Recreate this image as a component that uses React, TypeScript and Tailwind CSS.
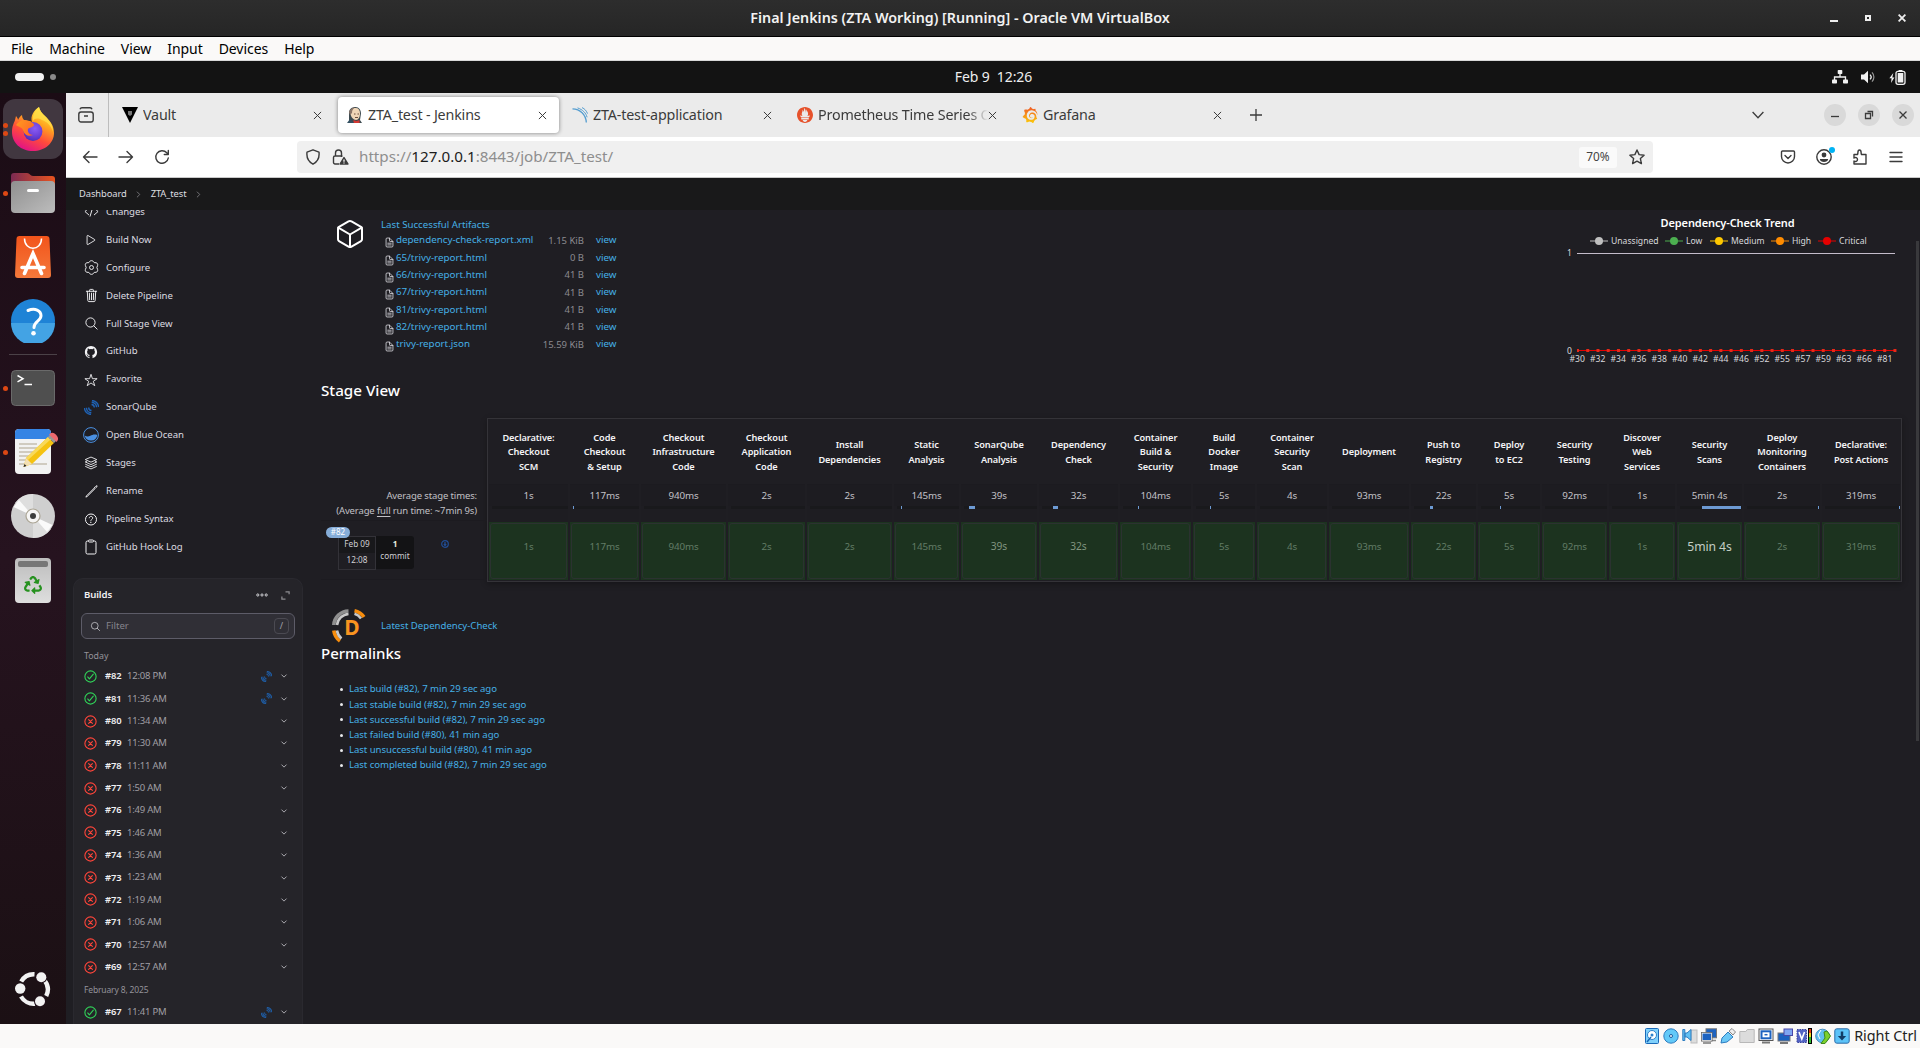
import React from "react";
import {
  IoCodeSlashOutline, IoPlayOutline, IoTrashOutline, IoSearchOutline, IoLogoGithub,
  IoStarOutline, IoPencilOutline, IoHelpCircleOutline, IoClipboardOutline, IoCubeOutline,
  IoDocumentTextOutline, IoCheckmarkCircleOutline, IoCloseCircleOutline, IoChevronDown, IoChevronForward,
} from "react-icons/io5";
import { FaRecycle } from "react-icons/fa";
import { SiGrafana, SiPrometheus } from "react-icons/si";

/* ---------- shared glyphs ---------- */

const Sonar = ({ className }: { className: string }) => (
  <svg viewBox="0 0 16 16" className={className} fill="none" stroke="currentColor" strokeWidth="1.5">
    <path d="M8 4.8A3.2 3.2 0 0 1 11 8M8.2 2.4A5.6 5.6 0 0 1 13.4 7.8M8.5.6A7.4 7.4 0 0 1 15.6 7.5" />
    <path d="M8 11.2A3.2 3.2 0 0 1 5 8M7.8 13.6A5.6 5.6 0 0 1 2.6 8.2M7.5 15.4A7.4 7.4 0 0 1 .4 8.5" />
  </svg>
);

const Ocean = ({ className }: { className: string }) => (
  <svg viewBox="0 0 16 16" className={className}>
    <circle cx="8" cy="8" r="7.4" fill="none" stroke="#4a90e2" strokeWidth="1" />
    <path d="M1.7 8.6c2 1.2 4 .9 5.6.2 2-.9 4-2 7-.8A6.4 6.4 0 0 1 1.7 8.6Z" fill="#4a90e2" />
  </svg>
);

const Gear = ({ className }: { className: string }) => (
  <svg viewBox="0 0 16 16" className={className} fill="none" stroke="currentColor" strokeWidth="1">
    <path d="M6.300 1.300C7 .5 9 .5 9.700 1.300l1.200 1.500 2 .1c1.300.2 2.100 1.900 1.600 3L13.700 8l.8 2.100c.5 1.100-.3 2.800-1.600 3l-2 .1-1.200 1.500c-.7.8-2.700.8-3.400 0l-1.200-1.500-2-.1c-1.300-.2-2.100-1.900-1.600-3L2.300 8l-.8-2.100c-.5-1.100.3-2.800 1.600-3l2-.1z" />
    <circle cx="8" cy="8" r="2.100" />
  </svg>
);

const Layers = ({ className }: { className: string }) => (
  <svg viewBox="0 0 16 16" className={className} fill="none" stroke="currentColor" strokeWidth="1" strokeLinejoin="round">
    <path d="M8 1.200l6.600 2.900L8 7 1.400 4.100zM1.400 6.800L8 9.800l6.600-3M1.400 9.300L8 12.300l6.600-3M1.400 11.800L8 14.800l6.600-3M1.400 6.800l2-.9M14.600 6.800l-2-.9" />
  </svg>
);

const Close = ({ className }: { className: string }) => (
  <svg viewBox="0 0 10 10" className={className} fill="none" stroke="currentColor" strokeWidth="1.1">
    <path d="M1 1l8 8M9 1l-8 8" />
  </svg>
);

/* ---------- host window ---------- */

const TitleBar = () => (
  <div className="relative flex h-[37px] shrink-0 items-center justify-center border-b border-black bg-gradient-to-b from-[#2d2d2d] to-[#262626]">
    <span className="text-[14.300px] font-semibold text-[#f2f2f2]">
      Final Jenkins (ZTA Working) [Running] - Oracle VM VirtualBox
    </span>
    <div className="absolute right-[14px] flex items-center gap-[27px] text-[#eee]">
      <span className="mt-[5px] block h-[2px] w-2 bg-[#eee]" />
      <span className="block size-[6px] border-2 border-[#eee]" />
      <svg viewBox="0 0 8 8" className="size-2" stroke="currentColor" strokeWidth="1.8"><path d="M.6.6l6.8 6.8M7.4.6L.6 7.4" /></svg>
    </div>
  </div>
);

const MenuBar = () => (
  <div className="flex h-6 shrink-0 items-center gap-4 border-b border-[#d8d8d8] bg-[#faf9f8] pl-[11px] text-[14px] leading-none tracking-[-0.060px] text-black">
    {["File", "Machine", "View", "Input", "Devices", "Help"].map((m) => <span key={m}>{m}</span>)}
  </div>
);

const GnomeBar = () => (
  <div className="flex h-8 shrink-0 items-center bg-[#131313] pl-[15px] pr-[14px]">
    <div className="flex flex-1 items-center gap-[6px]">
      <span className="h-2 w-[29px] rounded-full bg-[#f2f2f2]" />
      <span className="size-[6px] rounded-full bg-[#8a8a8a]" />
    </div>
    <span className="whitespace-pre pb-[2px] pl-[66px] text-[14px] tracking-[-0.1px] text-[#eee]">Feb 9  12:26</span>
    <div className="flex flex-1 items-center justify-end gap-[13px] text-[#f2f2f2]">
      <svg viewBox="0 0 16 14" className="h-[14px] w-4" fill="currentColor">
        <rect x="5.7" y="0" width="4.6" height="4" rx=".8" /><rect x="0" y="9.5" width="5" height="4" rx=".8" /><rect x="11" y="9.5" width="5" height="4" rx=".8" />
        <path d="M8 3v4M2.5 10V7h11v3" fill="none" stroke="currentColor" strokeWidth="1.3" />
      </svg>
      <svg viewBox="0 0 15 14" className="h-[14px] w-[15px]" fill="none" stroke="currentColor">
        <path d="M0 4.5h3L7 .8v12.4L3 9.5H0z" fill="currentColor" stroke="none" />
        <path d="M9 4.6a3.4 3.4 0 0 1 0 4.8" strokeWidth="1.3" />
        <path d="M11 2.4a6.5 6.5 0 0 1 0 9.2" strokeWidth="1.2" opacity=".6" />
      </svg>
      <svg viewBox="0 0 17 15" className="h-[15px] w-[17px]" fill="currentColor">
        <path d="M4.3 3L.4 8.2h2.2L2 13l3.4-5.4H3.3z" />
        <rect x="7" y="1.3" width="9" height="13" rx="2" fill="none" stroke="currentColor" strokeWidth="1.3" />
        <rect x="8.7" y="3" width="5.6" height="9.6" rx=".5" /><rect x="9.6" y="0" width="3.8" height="1.4" />
      </svg>
    </div>
  </div>
);

/* ---------- dock ---------- */

const Firefox = () => (
  <svg viewBox="0 0 42 44" className="h-[44px] w-[42px]">
    <defs>
      <linearGradient id="ff1" x1=".8" y1="0" x2=".3" y2="1">
        <stop offset="0" stopColor="#fff44f" /><stop offset=".35" stopColor="#ffa61f" /><stop offset=".65" stopColor="#ff4a3c" /><stop offset="1" stopColor="#e0108a" />
      </linearGradient>
      <radialGradient id="ff2" cx=".6" cy=".35" r=".7">
        <stop offset="0" stopColor="#8a5cf5" /><stop offset=".6" stopColor="#6a3fd6" /><stop offset="1" stopColor="#4b2db5" />
      </radialGradient>
      <linearGradient id="ff3" x1="0" y1="0" x2="1" y2=".6">
        <stop offset="0" stopColor="#ff9a1f" /><stop offset="1" stopColor="#ff6a26" />
      </linearGradient>
    </defs>
    <path d="M27 0c1 4 3 6 6 9 5 5 9 9 9 17 0 10-9 18-21 18S0 36 0 25c0-6 2-9 3-12l1-4c1 1 2 3 2 4 1-2 2-4 4-5 0 2 1 4 2 5 3 0 6 1 8 2C18 9 22 3 27 0Z" fill="url(#ff1)" />
    <path d="M27 0c1 4 3 6 6 9 5 5 8 9 8 16-2-7-6-10-11-12-4-2-7-2-9 1-1-5 2-11 6-14Z" fill="#ffe14a" opacity=".75" />
    <circle cx="21" cy="24.5" r="9.4" fill="url(#ff2)" />
    <path d="M4 18c3-4 7-6 12-4 3 1 6 2 6 4-1 3-5 2-6 4-1 3 2 6 5 6-4 2-9 0-10-5-1-3-4-3-7-5Z" fill="url(#ff3)" />
  </svg>
);

const dockIcons = {
  files: (
    <svg viewBox="0 0 44 42" className="h-[42px] w-11">
      <defs>
        <linearGradient id="fo" x1="0" x2="1"><stop offset="0" stopColor="#7b2a52" /><stop offset="1" stopColor="#e9541f" /></linearGradient>
        <linearGradient id="fg" x1="0" y1="0" x2="1" y2="1"><stop offset="0" stopColor="#8f8f8f" /><stop offset="1" stopColor="#bdbdbd" /></linearGradient>
      </defs>
      <path d="M0 4a3 3 0 0 1 3-3h13c3 0 3 3 6 3h19a3 3 0 0 1 3 3v12H0z" fill="url(#fo)" />
      <rect x="0" y="9" width="44" height="32" rx="4" fill="url(#fg)" /><rect x="16" y="17" width="12" height="3" rx="1.5" fill="#fff" />
    </svg>
  ),
  store: (
    <svg viewBox="0 0 36 42" className="h-[42px] w-9">
      <defs><linearGradient id="st" y2="1" x2="0"><stop offset="0" stopColor="#f2541b" /><stop offset="1" stopColor="#f4793b" /></linearGradient></defs>
      <path d="M4.500 0h27a3 3 0 0 1 3 3L36 39a3 3 0 0 1-3 3H3a3 3 0 0 1-3-3L1.500 3a3 3 0 0 1 3-3Z" fill="url(#st)" />
      <path d="M9.500 2.500c0 13 17 13 17 0" fill="none" stroke="#fff" strokeWidth="1.500" />
      <path d="M9.500 37.500L18 17.500l8.500 20M7 31.500h22" fill="none" stroke="#fff" strokeWidth="3.600" strokeLinecap="round" />
    </svg>
  ),
  help: (
    <svg viewBox="0 0 44 44" className="size-11">
      <circle cx="22" cy="22" r="22" fill="#1f83d6" /><path d="M0 24h44a22 22 0 0 1-44 0Z" fill="#43a3e4" />
      <path d="M17 11.500c7-3 13 0 13 5.300 0 5.200-7 5.700-7 11.700" fill="none" stroke="#fff" strokeWidth="3" strokeLinecap="round" /><circle cx="22.500" cy="34.200" r="2.300" fill="#fff" />
    </svg>
  ),
  terminal: (
    <svg viewBox="0 0 44 36" className="h-9 w-11">
      <rect x=".5" y=".5" width="43" height="35" rx="4" fill="#4f4f4f" stroke="#6a6a6a" />
      <path d="M6.500 5.500L12 8.700l-5.500 3.200M13.500 14.500H21" fill="none" stroke="#fff" strokeWidth="1.500" />
    </svg>
  ),
  editor: (
    <svg viewBox="0 0 44 46" className="ml-[5px] h-[46px] w-11">
      <rect x="1" y="0" width="36" height="45" rx="4" fill="#f2f2f2" /><path d="M1 10V4a4 4 0 0 1 4-4h28a4 4 0 0 1 4 4v6z" fill="#3584e4" />
      <path d="M5 15h18M5 19h18M5 23h16M5 27h14M5 31h10M5 35h28" stroke="#c5bfb0" strokeWidth="1.700" />
      <path d="M9.500 38l2.500-9L34 8l6 6-22 21z" fill="#f5c211" /><path d="M12 29l2 2 22-20-2-3z" fill="#f8d959" />
      <path d="M9.500 38l2.500-9 6 6z" fill="#f3dfb4" /><path d="M9.500 38l1-3 2 2z" fill="#222" />
      <path d="M34 8l2.500-2.500 6 6L40 14z" fill="#9a9996" /><path d="M36.500 5.500c3-2.500 8 3 6 6z" fill="#ed6a70" stroke="#ed6a70" strokeWidth="2" />
    </svg>
  ),
  disc: (
    <svg viewBox="0 0 44 44" className="size-11">
      <circle cx="22" cy="22" r="22" fill="#cfcfcf" /><path d="M22 22V0a22 22 0 0 0-18 9zM22 22v22a22 22 0 0 0 18-9z" fill="#dedede" />
      <path d="M22 22L2.500 13 8 6zM22 22l19.500 9-5.500 7z" fill="#fafafa" />
      <circle cx="22" cy="22" r="7" fill="#f6f5f4" stroke="#aba595" strokeWidth="1.200" /><circle cx="22" cy="22" r="3" fill="#3d3d3d" />
    </svg>
  ),
  trash: (
    <div className="flex h-[45px] w-9 flex-col items-center rounded-[4px] bg-gradient-to-b from-[#bdbdbd] to-[#dedede] pt-[3px]">
      <span className="mb-[9px] h-[6px] w-[30px] rounded-[2px] bg-[#777]" />
      <FaRecycle className="size-[18px] text-[#26911f]" />
    </div>
  ),
};

const Dots = ({ n }: { n: number }) => (
  <div className="absolute left-[3px] top-0 flex h-full flex-col items-center justify-center gap-[3px]">
    {Array.from({ length: n }, (_, i) => <span key={i} className="size-[5px] rounded-full bg-[#dd4814]" />)}
  </div>
);

const DockItem = ({ children, dots = 0 }: { children: React.ReactNode; dots?: number }) => (
  <div className="relative flex h-16 w-[66px] shrink-0 items-center justify-center">
    <Dots n={dots} />
    {children}
  </div>
);

const Dock = () => (
  <div className="flex w-[66px] shrink-0 flex-col items-center bg-gradient-to-b from-[#1b0c15] via-[#26131f] to-[#1b1014] pt-1">
    <DockItem dots={2}><div className="flex size-[60px] items-center justify-center rounded-[12px] bg-[#413740]"><Firefox /></div></DockItem>
    <DockItem dots={1}>{dockIcons.files}</DockItem>
    <DockItem>{dockIcons.store}</DockItem>
    <DockItem>{dockIcons.help}</DockItem>
    <div className="my-[1px] h-px w-12 shrink-0 bg-[#4b4147]" />
    <DockItem dots={1}>{dockIcons.terminal}</DockItem>
    <DockItem dots={1}>{dockIcons.editor}</DockItem>
    <DockItem>{dockIcons.disc}</DockItem>
    <DockItem>{dockIcons.trash}</DockItem>
    <svg viewBox="0 0 36 36" className="mb-[17px] mt-auto size-9" fill="none">
      <path d="M6.200 10.500A14.500 14.500 0 0 1 19.500 3.200M29.600 9.500a14.500 14.500 0 0 1 1.600 15.500M20 32.700A14.500 14.500 0 0 1 6 25.500" stroke="#f2f2f2" strokeWidth="4.400" />
      <circle cx="5.200" cy="17.500" r="5.200" fill="#f2f2f2" /><circle cx="26.300" cy="6.300" r="6" fill="#20111a" /><circle cx="26.300" cy="6.300" r="5" fill="#f2f2f2" /><circle cx="25" cy="30.300" r="6" fill="#20111a" /><circle cx="25" cy="30.300" r="5" fill="#f2f2f2" />
    </svg>
  </div>
);

/* ---------- firefox chrome ---------- */

const VaultLogo = () => (
  <svg viewBox="0 0 16 16" className="size-4"><path d="M0 0h16L8 16z" fill="#000" /><path d="M6 4h4v3.500L8 9 6 7.500z" fill="#777" /></svg>
);
const JenkinsLogo = () => (
  <svg viewBox="0 0 16 16" className="size-4">
    <path d="M2 16V6c0-4 3-6 6.500-6S14 3 14 6.500L13 13l2 3z" fill="#3d4a50" />
    <path d="M3.500 6C3.500 3 5.500 1 8.500 1S13 3 13 6.500 11.500 13 9 13 3.500 10 3.500 6Z" fill="#f0d6b7" />
    <path d="M2 5c1-3 3-4.500 6-4.500C6 2 5 3 5 6L3 8z" fill="#8a7568" />
    <path d="M7 7h1.500M10.500 7H12M8 10.500h3" stroke="#5b3d2c" strokeWidth=".9" />
    <path d="M6.500 13l3 1 3-1v3h-6z" fill="#d33833" /><path d="M0 16l3-4 4 4z" fill="#335061" />
  </svg>
);
const SonarLogo = () => (
  <svg viewBox="0 0 16 16" className="size-4" fill="none" stroke="#549dd0"><path d="M.5 1.800C8 2 14 7.500 14.300 15.500" strokeWidth="1.300" /><path d="M5.500.9c5 1.600 8.500 5 9.600 9.400M10 .6c2.800 1.200 4.600 3.400 5.500 6" strokeWidth="1" /></svg>
);
const GrafanaLogo = () => (
  <span className="block size-4">
    <svg className="absolute size-0"><defs><linearGradient id="gf" x2="0" y2="1"><stop offset="0" stopColor="#f05a28" /><stop offset="1" stopColor="#fbca0a" /></linearGradient></defs></svg>
    <SiGrafana className="size-4 fill-[url(#gf)]" />
  </span>
);

const tabs = [
  { title: "Vault", icon: <VaultLogo /> },
  { title: "ZTA_test - Jenkins", icon: <JenkinsLogo />, active: true },
  { title: "ZTA-test-application", icon: <SonarLogo /> },
  { title: "Prometheus Time Series C", icon: <SiPrometheus className="size-4 text-[#e6522c]" />, fade: true },
  { title: "Grafana", icon: <GrafanaLogo /> },
];

const TabStrip = () => (
  <div className="flex h-11 shrink-0 items-center bg-[#ebebeb] text-[#3b3b3b]">
    <div className="flex h-full w-[43px] shrink-0 items-center justify-center border-r border-[#bdbdbd]">
      <svg viewBox="0 0 16 16" className="-ml-[2px] size-4" fill="none" stroke="currentColor" strokeWidth="1.400">
        <rect x=".8" y="5" width="14.400" height="10" rx="2.200" /><path d="M2 2.300Q2.500.8 4 .8h8q1.500 0 2 1.500M6 9h4" />
      </svg>
    </div>
    <div className="ml-[4px] flex gap-1">
      {tabs.map((t) => (
        <div key={t.title} className={"flex h-9 w-[221px] items-center rounded-[4px] pl-[9px] pr-[12px] " + (t.active ? "bg-white shadow-[0_0_4px_rgba(0,0,0,0.45)]" : "")}>
          <span className="shrink-0">{t.icon}</span>
          <span className={"ml-[5px] flex-1 overflow-hidden whitespace-nowrap text-[14.300px] tracking-[-0.180px] " + (t.fade ? "[mask-image:linear-gradient(to_right,#000_88%,transparent)]" : "")}>{t.title}</span>
          <Close className="size-[9px] shrink-0" />
        </div>
      ))}
    </div>
    <svg viewBox="0 0 12 12" className="ml-[16px] size-3" stroke="currentColor" strokeWidth="1.300"><path d="M6 0v12M0 6h12" /></svg>
    <div className="ml-auto mr-[6px] flex items-center gap-3">
      <svg viewBox="0 0 12 8" className="mr-[48px] h-2 w-3" fill="none" stroke="currentColor" strokeWidth="1.300"><path d="M.6 1L6 6.800 11.400 1" /></svg>
      {[
        <path key="a" d="M3 8.500h8" />,
        <path key="b" d="M3.500 5.500h5v5h-5zM5.500 3.500h5v5" />,
        <path key="c" d="M3.500 3.500l7 7M10.500 3.500l-7 7" />,
      ].map((p, i) => (
        <span key={i} className="flex size-[22px] items-center justify-center rounded-full bg-[#d9d9d9]">
          <svg viewBox="0 0 14 14" className="size-[14px]" fill="none" stroke="currentColor" strokeWidth="1.300">{p}</svg>
        </span>
      ))}
    </div>
  </div>
);

const Tool = ({ children, className = "" }: { children: React.ReactNode; className?: string }) => (
  <svg viewBox="0 0 16 16" className={"size-4 shrink-0 " + className} fill="none" stroke="currentColor" strokeWidth="1.400" strokeLinejoin="round" strokeLinecap="round">{children}</svg>
);

const UrlRow = () => (
  <div className="flex h-[41px] shrink-0 items-center border-b border-[#c9c9c9] bg-white pl-4 pr-[16px] text-[#3b3b3b]">
    <div className="flex w-[215px] gap-5">
      <Tool><path d="M15 8H1.500M7 2.500L1.500 8 7 13.500" /></Tool>
      <Tool><path d="M1 8h13.500M9 2.500L14.500 8 9 13.500" /></Tool>
      <Tool><path d="M14.300 9A6.300 6.300 0 1 1 12.800 3.800L14 5M14.300 1.500v4h-4" /></Tool>
    </div>
    <div className="flex h-8 w-[1356px] items-center rounded-[4px] bg-[#f0f0f0] pl-2 pr-2">
      <Tool><path d="M8 .8l6 2.400c.6 5-1.500 9.500-6 12C3.500 12.700 1.400 8.200 2 3.200z" /></Tool>
      <svg viewBox="0 0 17 16" className="ml-[11px] h-4 w-[17px]" fill="none" stroke="currentColor" strokeWidth="1.400">
        <path d="M7 15H3a1.500 1.500 0 0 1-1.500-1.500v-5A1.500 1.500 0 0 1 3 7h7.500M3.500 7V4a3 3 0 0 1 6 0v4" /><path d="M12 8.500L16 15H8z" fill="currentColor" strokeLinejoin="round" /><path d="M12 10.500v2.200M12 13.500v1" stroke="#f0f0f0" />
      </svg>
      <span className="ml-[10px] pb-[2px] text-[15.200px] text-[#8e8e8e]">https://<span className="text-[#1c1c1c]">127.0.0.1</span>:8443/job/ZTA_test/</span>
      <span className="ml-auto mr-3 flex h-[21px] w-[38px] items-center justify-center rounded-[3px] bg-[#fafafa] text-[11.800px] text-[#444]">70%</span>
      <Tool><path d="M8 1l2.100 4.600 5 .6-3.700 3.400 1 5L8 12.100l-4.400 2.500 1-5L.9 6.200l5-.6z" /></Tool>
    </div>
    <div className="ml-auto flex gap-5">
      <Tool><path d="M1.500 3a1 1 0 0 1 1-1h11a1 1 0 0 1 1 1v4.500a6.500 6.500 0 0 1-13 0zM5 6.500l3 3 3-3" /></Tool>
      <svg viewBox="0 0 18 16" className="-mr-[2px] h-4 w-[18px] overflow-visible">
        <circle cx="8" cy="8" r="7.200" fill="none" stroke="#3b3b3b" strokeWidth="1.400" /><circle cx="8" cy="6" r="2.400" fill="#3b3b3b" /><path d="M3.800 10h8.400c0 4-8.400 4-8.400 0Z" fill="#3b3b3b" /><circle cx="16" cy="1" r="3" fill="#00b3f4" />
      </svg>
      <Tool><path d="M2 5.500h3.500c1-1.500-.5-4.500 2-4.500s1 3 2 4.500H14V15H2v-3c1.500 1 3.500.5 3.500-1.500S3.500 8 2 9z" /></Tool>
      <Tool><path d="M2 3.500h12M2 8h12M2 12.500h12" /></Tool>
    </div>
  </div>
);

/* ---------- jenkins sidebar ---------- */

const tasks: [string, React.ReactNode][] = [
  ["Changes", <IoCodeSlashOutline className="size-[15px]" />],
  ["Build Now", <IoPlayOutline className="size-[14px]" />],
  ["Configure", <Gear className="size-[15px]" />],
  ["Delete Pipeline", <IoTrashOutline className="size-[15px]" />],
  ["Full Stage View", <IoSearchOutline className="size-[15px]" />],
  ["GitHub", <IoLogoGithub className="size-[14px]" />],
  ["Favorite", <IoStarOutline className="size-[14px]" />],
  ["SonarQube", <Sonar className="size-[15px] text-[#1f62b4]" />],
  ["Open Blue Ocean", <Ocean className="size-4" />],
  ["Stages", <Layers className="size-[14px]" />],
  ["Rename", <IoPencilOutline className="size-[15px]" />],
  ["Pipeline Syntax", <IoHelpCircleOutline className="size-[17px]" />],
  ["GitHub Hook Log", <IoClipboardOutline className="size-4" />],
];

const builds: [string, string, boolean][] = [
  ["#82", "12:08 PM", true], ["#81", "11:36 AM", true], ["#80", "11:34 AM", false], ["#79", "11:30 AM", false],
  ["#78", "11:11 AM", false], ["#77", "1:50 AM", false], ["#76", "1:49 AM", false], ["#75", "1:46 AM", false],
  ["#74", "1:36 AM", false], ["#73", "1:23 AM", false], ["#72", "1:19 AM", false], ["#71", "1:06 AM", false],
  ["#70", "12:57 AM", false], ["#69", "12:57 AM", false],
];

const BuildRow = ({ b: [id, time, ok] }: { b: [string, string, boolean] }) => (
  <div className="flex h-[22.360px] shrink-0 items-center pl-[9px] pr-[14px]">
    {ok ? <IoCheckmarkCircleOutline className="size-[15px] text-[#30d158] [&_*]:stroke-[38px]" /> : <IoCloseCircleOutline className="size-[15px] text-[#ff453a] [&_*]:stroke-[38px]" />}
    <span className="ml-[7px] w-[17px] text-[9.400px] font-semibold tracking-[-0.100px] text-[#f0f0f2]">{id}</span>
    <span className="ml-[5px] text-[9.500px] tracking-[-0.220px] text-[#a09fa4]">{time}</span>
    <span className="ml-auto flex items-center gap-2">
      {ok && <Sonar className="size-[11px] text-[#1f5ca3]" />}
      <IoChevronDown className="size-2 text-[#b5b4b9] [&_*]:stroke-[58px]" />
    </span>
  </div>
);

const Sidebar = () => (
  <div className="flex w-[237px] shrink-0 flex-col overflow-hidden pl-[7px]">
    <div className="-mt-3 shrink-0">
      {tasks.map(([label, icon]) => (
        <div key={label} className="flex h-[27.950px] items-center pl-[10px] text-[9.600px] tracking-[-0.050px] text-[#dcdbe0]">
          <span className="flex w-4 justify-center text-[#f4f4f6]">{icon}</span>
          <span className="ml-[7px]">{label}</span>
        </div>
      ))}
    </div>
    <div className="mt-[17px] flex w-[230px] flex-1 flex-col overflow-hidden rounded-t-[10px] border border-b-0 border-[#2a292f] bg-[#252429]">
      <div className="flex h-[34px] shrink-0 items-center pb-[2px] pl-[10px] pr-3">
        <span className="text-[9.600px] font-semibold tracking-[-0.100px] text-[#f2f2f4]">Builds</span>
        <svg viewBox="0 0 12 4" className="ml-auto h-1 w-3" fill="none" stroke="#d0d0d4"><circle cx="1.800" cy="2" r="1.100" /><circle cx="6" cy="2" r="1.100" /><circle cx="10.200" cy="2" r="1.100" /></svg>
        <svg viewBox="0 0 10 10" className="ml-[13px] size-[9px]" fill="none" stroke="#8c8b90" strokeWidth="1.400"><path d="M5 1h4v2.500M1 6v3h4" /></svg>
      </div>
      <div className="mx-[7px] flex h-[26px] shrink-0 items-center rounded-[6px] border border-[#5d5c68] bg-[#302f36] pl-2 pr-[5px]">
        <IoSearchOutline className="size-[11px] text-[#dcdce0]" />
        <span className="ml-[5px] text-[9.600px] text-[#85848c]">Filter</span>
        <span className="ml-auto flex h-4 w-[15px] items-center justify-center rounded-[4px] border border-[#4b4a52] text-[9px] text-[#a3a2aa]">/</span>
      </div>
      <div className="flex h-[26px] shrink-0 items-end pb-[2px] pl-[10px] text-[8.800px] text-[#94939a]">Today</div>
      {builds.map((b) => <BuildRow key={b[0]} b={b} />)}
      <div className="flex h-[23px] shrink-0 items-center pl-[10px] pt-[2px] text-[8.500px] tracking-[-0.150px] text-[#94939a]">February 8, 2025</div>
      <BuildRow b={["#67", "11:41 PM", true]} />
    </div>
  </div>
);

/* ---------- jenkins main panel ---------- */

const artifacts = [
  ["dependency-check-report.xml", "1.15 KiB"], ["65/trivy-report.html", "0 B"], ["66/trivy-report.html", "41 B"],
  ["67/trivy-report.html", "41 B"], ["81/trivy-report.html", "41 B"], ["82/trivy-report.html", "41 B"], ["trivy-report.json", "15.59 KiB"],
];

const Artifacts = () => (
  <div className="flex pl-[16px] pt-[7px]">
    <IoCubeOutline className="-ml-[3px] mt-[1px] size-8 text-white" />
    <div className="ml-[15px] text-[9.800px] text-[#45b0e6]">
      <div className="h-[15px] text-[9.700px] leading-[15px]">Last Successful Artifacts</div>
      {artifacts.map(([name, size]) => (
        <div key={name} className="flex h-[17.350px] items-center pl-[3px]">
          <IoDocumentTextOutline className="mt-[4px] size-[11px] text-[#dddce1] [&_*]:stroke-[38px]" />
          <span className="ml-[1px] w-[134px] whitespace-nowrap">{name}</span>
          <span className="w-[54px] text-right text-[9.500px] text-[#8c8b90]">{size}</span>
          <span className="ml-3">view</span>
        </div>
      ))}
    </div>
  </div>
);

const series = [
  ["Unassigned", "#c0c0c0", "w-[75px]"], ["Low", "#4caf50", "w-[45px]"], ["Medium", "#ffc800", "w-[61px]"],
  ["High", "#ff8c00", "w-[47px]"], ["Critical", "#e60000", "w-[50px]"],
];
const ticks = ["#30", "#32", "#34", "#36", "#38", "#40", "#42", "#44", "#46", "#52", "#55", "#57", "#59", "#63", "#66", "#81"];

const Trend = () => (
  <div className="mr-[17px] w-[332px] pt-[5px] text-[#d9d9dc]">
    <div className="pr-[11px] text-center text-[11px] font-semibold leading-[15px] tracking-[-0.100px] text-white">Dependency-Check Trend</div>
    <div className="mt-[4px] flex pl-[23px] text-[8.600px] leading-[14px]">
      {series.map(([name, color, w]) => (
        <div key={name} className={"flex items-center " + w}>
          <svg viewBox="0 0 18 8" className="mr-[3px] h-2 w-[18px] shrink-0"><path d="M0 4h18" stroke={color} strokeWidth="1.400" opacity=".7" /><circle cx="9" cy="4" r="4" fill={color} /></svg>
          <span>{name}</span>
        </div>
      ))}
    </div>
    <div className="-mt-[1px] flex">
      <div className="flex w-[10px] shrink-0 flex-col justify-between text-[8.600px] leading-3"><span>1</span><span>0</span></div>
      <svg viewBox="0 0 322 110" className="h-[110px] w-[322px]">
        <rect x="0" y="6" width="318" height="1" fill="#c4bccb" />
        <path d="M0 103.500h318" stroke="#e60000" strokeWidth="1" />
        {Array.from({ length: 32 }, (_, i) => <rect key={i} x={i * 10.24 - 1} y="102" width="3" height="3" fill="#e5291a" />)}
      </svg>
    </div>
    <div className="-mt-[3px] flex text-[8.600px] leading-[10px]">
      {ticks.map((t) => <span key={t} className="w-[20.500px] shrink-0 text-center">{t}</span>)}
    </div>
  </div>
);

type Stage = { name: string[]; avg: string; tone?: "mid" | "hi"; bar?: [number, number] };
const stages: Stage[] = [
  { name: ["Declarative:", "Checkout", "SCM"], avg: "1s" },
  { name: ["Code", "Checkout", "& Setup"], avg: "117ms", bar: [3, 1] },
  { name: ["Checkout", "Infrastructure", "Code"], avg: "940ms" },
  { name: ["Checkout", "Application", "Code"], avg: "2s" },
  { name: ["Install", "Dependencies"], avg: "2s" },
  { name: ["Static", "Analysis"], avg: "145ms", bar: [7, 1] },
  { name: ["SonarQube", "Analysis"], avg: "39s", tone: "mid", bar: [8, 6] },
  { name: ["Dependency", "Check"], avg: "32s", tone: "mid", bar: [14, 5] },
  { name: ["Container", "Build &", "Security"], avg: "104ms", bar: [18, 1] },
  { name: ["Build", "Docker", "Image"], avg: "5s", bar: [17, 1] },
  { name: ["Container", "Security", "Scan"], avg: "4s" },
  { name: ["Deployment"], avg: "93ms" },
  { name: ["Push to", "Registry"], avg: "22s", bar: [19, 3] },
  { name: ["Deploy", "to EC2"], avg: "5s", bar: [22, 1] },
  { name: ["Security", "Testing"], avg: "92ms" },
  { name: ["Discover", "Web", "Services"], avg: "1s" },
  { name: ["Security", "Scans"], avg: "5min 4s", tone: "hi", bar: [25, 39] },
  { name: ["Deploy", "Monitoring", "Containers"], avg: "2s", bar: [74, 1] },
  { name: ["Declarative:", "Post Actions"], avg: "319ms", bar: [77, 1] },
];

const StageColumn = ({ s }: { s: Stage }) => (
  <div className="flex flex-col text-center">
    <div className="flex h-[65px] flex-col justify-center pt-[2px] text-[9.200px] font-semibold leading-[14.600px] tracking-[-0.080px] text-[#f4f4f6]">
      {s.name.map((l) => <span key={l} className="whitespace-nowrap">{l}</span>)}
    </div>
    <div className="flex h-[22px] items-center justify-center border-t border-[#1c1b20] bg-[#1d1c21] pt-[2px] text-[9.800px] tracking-[-0.100px] text-[#c2c1c6]">{s.avg}</div>
    <div className="h-4 bg-[#1e1d22]">
      <div className="ml-[3px] flex h-[3px] bg-[#19191c]">
        {s.bar && <span className="-ml-[3px] h-[3px] bg-[#6d9ad3]" style={{ width: s.bar[1], transform: `translateX(${s.bar[0]}px)` }} />}
      </div>
    </div>
    <div className="h-[58px] bg-[#1c331f] p-[1px]">
      <div className={"flex h-full items-center justify-center rounded-[3px] border border-[#2b3230] pb-2 " + (s.tone === "hi" ? "text-[12.200px] tracking-[-0.100px] text-[#c3cdc5]" : s.tone === "mid" ? "text-[10.200px] text-[#81957f]" : "text-[9.800px] tracking-[-0.100px] text-[#627c66]")}>{s.avg}</div>
    </div>
  </div>
);

const StageView = () => (
  <div className="flex">
    <div className="flex w-[166px] flex-col">
      <div className="pr-[10px] pt-[70px] text-right text-[9.500px] leading-[15.300px] tracking-[-0.130px] text-[#c2c1c6]">
        <div>Average stage times:</div>
        <div className="whitespace-nowrap">(Average <span className="underline underline-offset-2">full</span> run time: ~7min 9s)</div>
      </div>
      <div className="relative mt-[1px] flex h-[60px] border-y border-[#1c1b20] pl-[17px] pt-[15px] text-[8.200px] leading-none text-[#d0cfd4]">
        <div className="flex h-[34px] w-[38px] flex-col border border-[#333238] text-center">
          <span className="flex flex-1 items-center justify-center bg-[#18181b]">Feb 09</span>
          <span className="flex flex-1 items-center justify-center">12:08</span>
        </div>
        <div className="flex h-[33px] w-[38px] flex-col items-center justify-center gap-[3px] rounded-r-[3px] bg-[#131315] pb-1"><b className="text-[#e8f0e0]">1</b><span>commit</span></div>
        <svg viewBox="0 0 8 8" className="ml-[27px] mt-1 size-2" fill="none" stroke="#204d96" strokeWidth="1.200"><circle cx="4" cy="4" r="3.300" /><path d="M4 2v3.500M2.800 4.200L4 5.500l1.200-1.300" /></svg>
        <span className="absolute left-[5px] top-[6px] flex h-[11px] w-6 items-center justify-center rounded-full bg-[#86add8] text-[8px] text-white">#82</span>
      </div>
    </div>
    <div className="grid w-[1415px] grid-cols-[79px_69px_85px_77px_85px_65px_76px_79px_71px_62px_70px_80px_65px_62px_65px_66px_65px_76px_78px] gap-[2px] border border-[#343338] pb-[1px] pl-[1px] shadow-[0_2px_6px_rgba(0,0,0,0.3)]">
      {stages.map((s, i) => <StageColumn key={i} s={s} />)}
    </div>
  </div>
);

const permalinks = [
  "Last build (#82), 7 min 29 sec ago", "Last stable build (#82), 7 min 29 sec ago", "Last successful build (#82), 7 min 29 sec ago",
  "Last failed build (#80), 41 min ago", "Last unsuccessful build (#80), 41 min ago", "Last completed build (#82), 7 min 29 sec ago",
];

const DepCheckLogo = () => (
  <div className="relative flex size-[34px] items-center justify-center">
    <svg viewBox="0 0 34 34" className="absolute inset-0 size-[34px]" fill="none">
      <path d="M1.800 16A15 15 0 0 1 16.500 2" stroke="#8f8f8f" strokeWidth="3.600" /><path d="M5 16A12.500 12.500 0 0 1 16.500 5" stroke="#c9c9c9" strokeWidth="2.600" />
      <path d="M22.500 1.800A15.500 15.500 0 0 1 32 8" stroke="#f78d0d" strokeWidth="3.600" /><path d="M22.500 4.800A12.500 12.500 0 0 1 29 9.500" stroke="#c9c9c9" strokeWidth="2.600" />
      <path d="M1.800 21.500A15.500 15.500 0 0 0 8 32" stroke="#f78d0d" strokeWidth="3.600" /><path d="M5 21.500A12.500 12.500 0 0 0 9.500 29.500" stroke="#c9c9c9" strokeWidth="2.600" />
    </svg>
    <span className="relative pl-[6px] pt-[3px] text-[21px] font-bold leading-none text-[#f99420]">D</span>
  </div>
);

const Main = () => (
  <div className="min-w-0 flex-1 pl-[18px]">
    <div className="flex h-[162px] justify-between"><Artifacts /><Trend /></div>
    <h2 className="flex h-[46px] items-center pb-[10px] text-[15.200px] font-medium text-white">Stage View</h2>
    <StageView />
    <div className="mt-[27px] flex h-[34px] items-center pl-[11px]">
      <DepCheckLogo />
      <span className="ml-[15px] text-[9.600px] text-[#45b0e6]">Latest Dependency-Check</span>
    </div>
    <h2 className="flex h-[22px] items-center pb-[2px] text-[15px] font-medium text-white">Permalinks</h2>
    <ul className="mt-[17px] pl-[19px]">
      {permalinks.map((p) => (
        <li key={p} className="flex h-[15.200px] items-center gap-[6px] text-[9.600px] tracking-[-0.050px] text-[#45b0e6]">
          <span className="size-[3px] rounded-full bg-[#e8e8ea]" />{p}
        </li>
      ))}
    </ul>
  </div>
);

const Jenkins = () => (
  <div className="flex min-h-0 flex-1 flex-col bg-[#1f1e23]">
    <div className="z-10 flex h-8 shrink-0 items-center bg-[#19191a] pl-[13px] text-[9.400px] tracking-[-0.100px] text-[#dedee0]">
      <span>Dashboard</span><IoChevronForward className="ml-[7px] size-[9px] text-[#807f84]" />
      <span className="ml-[8px]">ZTA_test</span><IoChevronForward className="ml-[8px] size-[9px] text-[#807f84]" />
    </div>
    <div className="flex min-h-0 flex-1">
      <Sidebar />
      <Main />
      <div className="w-[4px] shrink-0 pt-[31px]"><div className="h-[500px] w-[3px] bg-[#39393c]" /></div>
    </div>
  </div>
);

/* ---------- virtualbox status bar ---------- */

const StatusIcon = ({ children }: { children: React.ReactNode }) => (
  <svg viewBox="0 0 16 16" className="size-4 shrink-0" fill="none">{children}</svg>
);

const StatusBar = () => (
  <div className="flex h-6 shrink-0 items-center justify-end gap-[3px] bg-[#faf9f8] pr-[3px]">
    <StatusIcon><rect x="1.500" y=".5" width="13" height="15" rx="1" fill="#7fd0fb" stroke="#1a69b8" /><circle cx="8" cy="7" r="4.500" fill="#fff" stroke="#2d82cc" /><circle cx="8" cy="7" r="1.500" fill="#2d82cc" /><path d="M3 14l4-5" stroke="#1a69b8" strokeWidth="1.500" /></StatusIcon>
    <StatusIcon><circle cx="8" cy="8" r="7.200" fill="#62c9f8" stroke="#2c7cc0" /><circle cx="8" cy="8" r="1.500" fill="#fff" stroke="#1a5a9c" /></StatusIcon>
    <StatusIcon><rect x="9" y="2" width="6" height="13" fill="#ddd" stroke="#bbb" /><path d="M.8 1.500h2v11h-2zM3 5h2l4-3.500v11L5 9H3z" fill="#62c0f2" stroke="#2c7cc0" /></StatusIcon>
    <StatusIcon><rect x="5" y=".8" width="10.500" height="9" fill="#1c62c0" stroke="#777" /><path d="M9 12.500h6" stroke="#888" strokeWidth="1.500" /><rect x="1" y="5" width="9.500" height="7.500" fill="#1c62c0" stroke="#fff" /><rect x=".4" y="4.400" width="10.700" height="8.700" stroke="#666" strokeWidth=".8" /><path d="M2 15h8" stroke="#777" strokeWidth="1.500" /></StatusIcon>
    <StatusIcon><path d="M1 15l1-5 6-6 5 5-6 5z" fill="#6cc8f6" stroke="#2c7cc0" /><path d="M9 3l3-2.500L15.500 4 13 7z" fill="#eee" stroke="#888" /></StatusIcon>
    <StatusIcon><path d="M.8 14.500V3.500h6l1.500-2h6.900v13z" fill="#dcdcdc" stroke="#b8b8b8" /></StatusIcon>
    <StatusIcon><rect x="1" y="1" width="14" height="11.500" fill="#fff" stroke="#555" /><rect x="3.500" y="3.300" width="9" height="7" fill="#fff" stroke="#1c62c0" strokeWidth="2" /><path d="M6.500 6.700h3" stroke="#1c62c0" strokeWidth="1.500" /><path d="M4 14.500h8" stroke="#777" strokeWidth="2" /></StatusIcon>
    <StatusIcon><rect x="1" y="5" width="12" height="8" fill="#1c62c0" stroke="#777" /><rect x="7" y="1" width="8.500" height="6.500" fill="#7fa5f2" stroke="#4a47a8" /><path d="M3 15h8" stroke="#777" strokeWidth="2" /></StatusIcon>
    <StatusIcon><rect x="1" y="1.500" width="9.500" height="13" fill="#5363c4" stroke="#3a459c" strokeDasharray="1.500 1" /><path d="M3 4l2.800 7L8.500 4" stroke="#fff" strokeWidth="1.600" /><rect x="12" y="0" width="4" height="16" fill="#000" /><path d="M14 1v4" stroke="#e33a1a" strokeWidth="2" /><path d="M14 5v4" stroke="#f2d21a" strokeWidth="2" /><path d="M14 9v6" stroke="#2dbb2d" strokeWidth="2" /></StatusIcon>
    <StatusIcon><circle cx="7.500" cy="8" r="6.800" fill="#62bff0" stroke="#4a8fc0" /><path d="M6 2l-3 5 2 4" stroke="#fff" /><path d="M9 4l3-1 3.500 5-3.500 5-2 2.500H6L10 10z" fill="#7cd02c" stroke="#3e8a1a" /></StatusIcon>
    <StatusIcon><rect x=".8" y=".8" width="14.400" height="14.400" rx="2" fill="#5cc3f8" stroke="#2c6ca8" /><path d="M8 3.500V9" stroke="#123c66" strokeWidth="2.500" /><path d="M3.800 8h8.400L8 12.500z" fill="#123c66" /></StatusIcon>
    <span className="ml-[1px] text-[14.400px] leading-none tracking-[-0.050px] text-[#222]">Right Ctrl</span>
  </div>
);

export default function App() {
  return (
    <div className="flex h-[1048px] w-[1920px] flex-col overflow-hidden bg-[#131313] font-['Noto_Sans',sans-serif]">
      <TitleBar />
      <MenuBar />
      <GnomeBar />
      <div className="flex min-h-0 flex-1">
        <Dock />
        <div className="flex min-w-0 flex-1 flex-col">
          <TabStrip />
          <UrlRow />
          <Jenkins />
        </div>
      </div>
      <StatusBar />
    </div>
  );
}
